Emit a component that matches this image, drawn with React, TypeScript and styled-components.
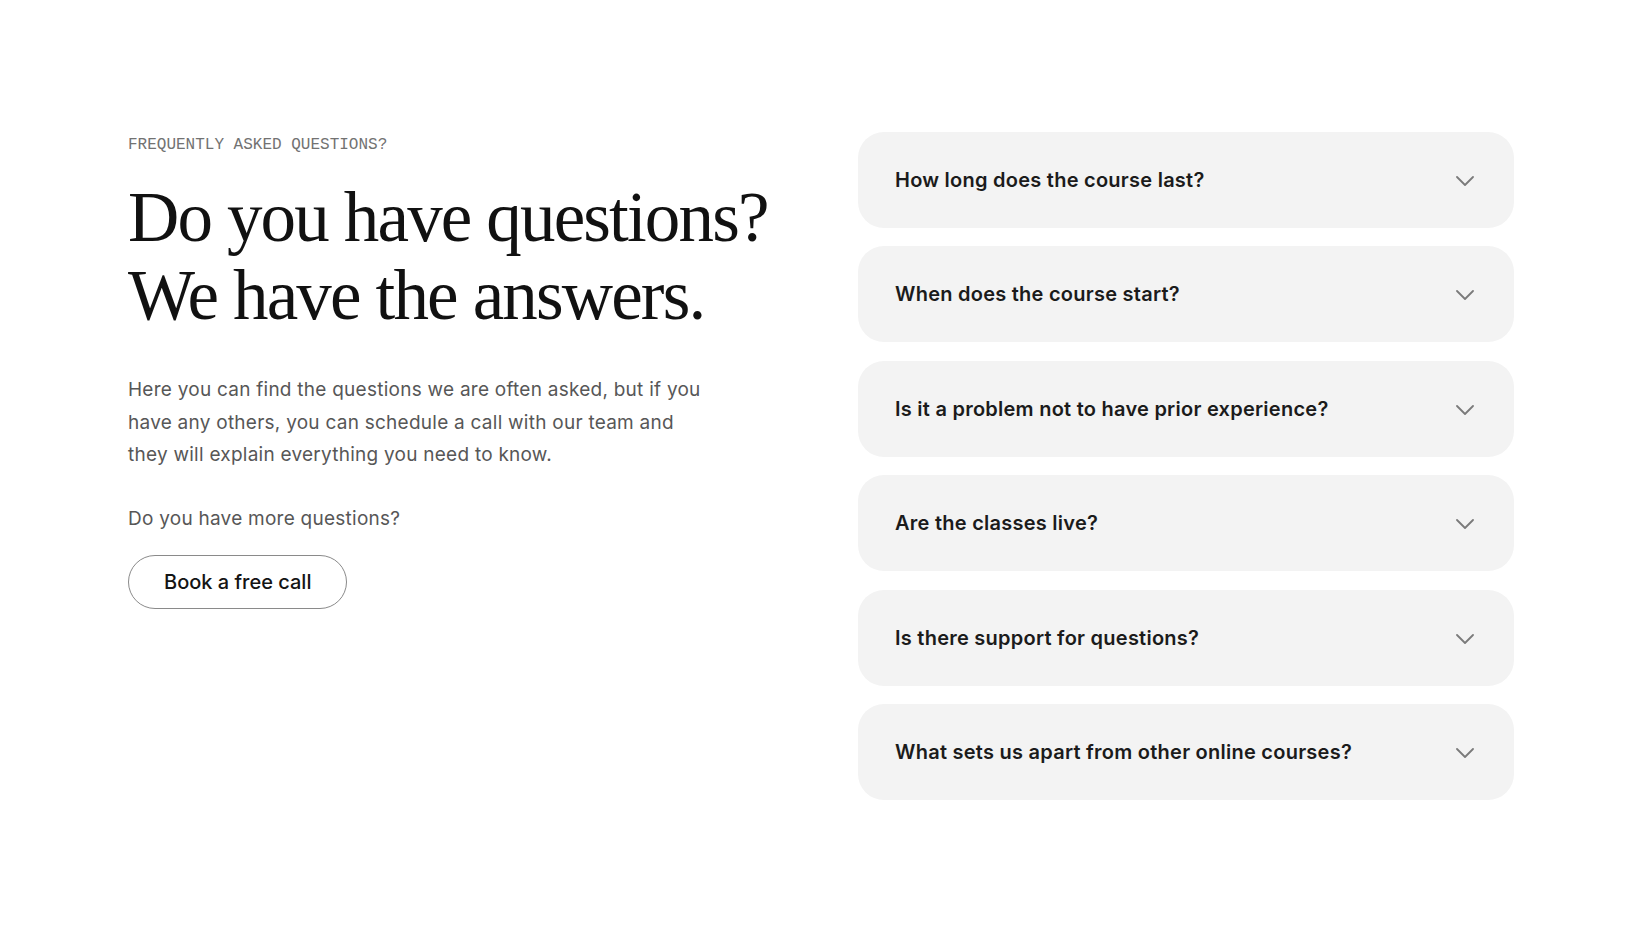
import React from "react"
import styled, { createGlobalStyle } from "styled-components"

const GlobalStyle = createGlobalStyle`
  html, body {
    margin: 0;
    padding: 0;
    background: #ffffff;
  }
  body {
    font-family: Inter, "Noto Sans", sans-serif;
    -webkit-font-smoothing: antialiased;
  }
  * {
    box-sizing: border-box;
  }
`

const Section = styled.section`
  min-height: 100vh;
  padding: 132px 129px 0 128px;
  display: grid;
  grid-template-columns: 1fr 656px;
  column-gap: 74px;
  align-items: start;
`

const Intro = styled.div`
  display: flex;
  flex-direction: column;
  align-items: flex-start;
`

const Eyebrow = styled.div`
  font-family: "Liberation Mono", "DejaVu Sans Mono", monospace;
  font-size: 16px;
  line-height: 27px;
  color: #727272;
  text-transform: uppercase;
`

const Heading = styled.h2`
  margin: 20px 0 0 0;
  font-family: "Liberation Serif", "DejaVu Serif", serif;
  font-weight: 400;
  font-size: 71px;
  line-height: 77.6px;
  letter-spacing: -1.85px;
  color: #111111;
`

const Lead = styled.p`
  margin: 40px 0 0 0;
  max-width: 585px;
  font-size: 19px;
  line-height: 32.6px;
  letter-spacing: 0.25px;
  color: #575757;
`

const Prompt = styled.p`
  margin: 31px 0 0 0;
  font-size: 19px;
  line-height: 32.6px;
  letter-spacing: 0.25px;
  color: #575757;
`

const CallButton = styled.button`
  margin-top: 19px;
  height: 54px;
  padding: 0 35px;
  border: 1px solid #8a8a8a;
  border-radius: 999px;
  background: #ffffff;
  font-family: Inter, "Noto Sans", sans-serif;
  font-size: 20px;
  font-weight: 500;
  color: #141414;
  cursor: pointer;
`

const QuestionList = styled.div`
  display: flex;
  flex-direction: column;
  gap: 18.4px;
`

const QuestionCard = styled.button`
  height: 96px;
  width: 100%;
  padding: 0 40px 0 37px;
  display: flex;
  align-items: center;
  justify-content: space-between;
  border: none;
  border-radius: 26px;
  background: #f3f3f3;
  text-align: left;
  cursor: pointer;
  font-family: Inter, "Noto Sans", sans-serif;
  font-size: 20px;
  font-weight: 600;
  letter-spacing: 0.25px;
  color: #1b1b1b;
`

const Chevron = styled.svg`
  flex: none;
  margin-top: 2px;
`

const questions = [
  "How long does the course last?",
  "When does the course start?",
  "Is it a problem not to have prior experience?",
  "Are the classes live?",
  "Is there support for questions?",
  "What sets us apart from other online courses?",
]

const ChevronDown = () => (
  <Chevron width="18" height="10" viewBox="0 0 18 10" fill="none">
    <path d="M1 1 L9 9 L17 1" stroke="#7a7a7a" strokeWidth="1.8" strokeLinecap="round" strokeLinejoin="round" />
  </Chevron>
)

export default function App() {
  return (
    <>
      <GlobalStyle />
      <Section>
        <Intro>
          <Eyebrow>Frequently asked questions?</Eyebrow>
          <Heading>
            Do you have questions?
            <br />
            We have the answers.
          </Heading>
          <Lead>
            Here you can find the questions we are often asked, but if you have any others, you can schedule a call
            with our team and they will explain everything you need to know.
          </Lead>
          <Prompt>Do you have more questions?</Prompt>
          <CallButton>Book a free call</CallButton>
        </Intro>
        <QuestionList>
          {questions.map((q) => (
            <QuestionCard key={q}>
              <span>{q}</span>
              <ChevronDown />
            </QuestionCard>
          ))}
        </QuestionList>
      </Section>
    </>
  )
}
